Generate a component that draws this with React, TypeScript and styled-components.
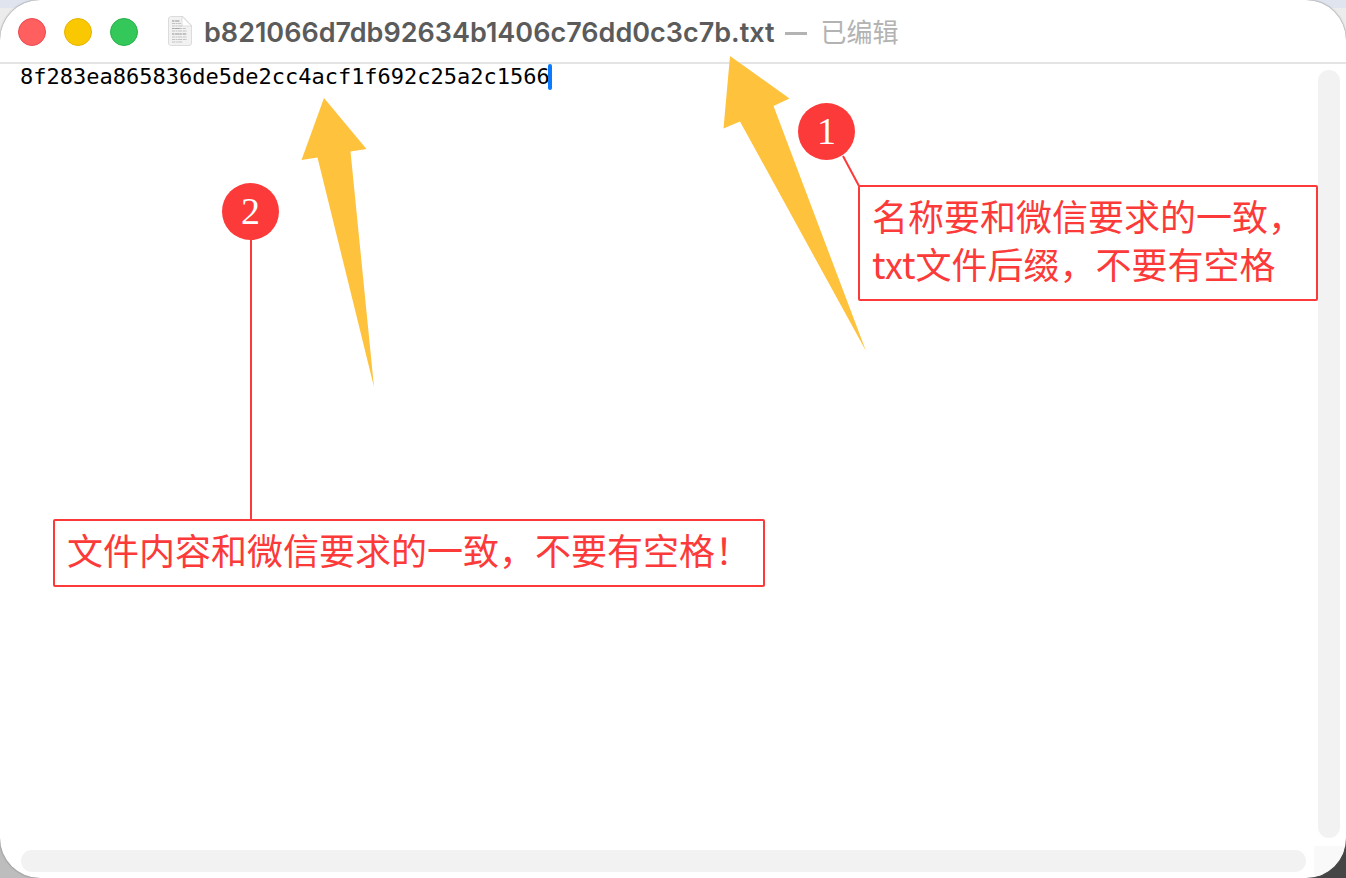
import React from "react";
import styled, { createGlobalStyle } from "styled-components";

const RED = "#fb3a39";
const AMBER = "#fec23d";

const GlobalStyle = createGlobalStyle`
  * { box-sizing: border-box; }
  body {
    margin: 0;
    background:
      linear-gradient(#e0e4ee, #e0e4ee) 0 0 / 100% 8px no-repeat,
      linear-gradient(90deg, #bdbdbd 50%, #454545 50%) 0 100% / 100% 50% no-repeat,
      #ececec;
    font-family: Inter, "Noto Sans CJK SC", sans-serif;
  }
`;

const Window = styled.main`
  position: relative;
  display: flex;
  flex-direction: column;
  min-height: 100vh;
  overflow: hidden;
  border-radius: 40px;
  background: #fff;
  box-shadow: 0 0 2px #666;
`;

const TitleBar = styled.header`
  display: flex;
  align-items: center;
  height: 64px;
  padding: 2px 18px 0;
  border-bottom: 2px solid #e4e4e4;
`;

const Lights = styled.div`
  display: flex;
  gap: 18px;
  margin-right: 30px;
`;

const Light = styled.button<{ $fill: string; $edge: string }>`
  width: 28px;
  height: 28px;
  padding: 0;
  border: 1px solid ${(p) => p.$edge};
  border-radius: 50%;
  background: ${(p) => p.$fill};
`;

const DocIcon = styled.svg`
  flex: none;
  width: 24px;
  height: 30px;
  margin: 0 12px 2px 0;
`;

const FileName = styled.h1`
  margin: 0;
  padding-top: 2px;
  color: #5b5b5b;
  font-size: 27px;
  font-weight: 600;
  line-height: 32px;
  white-space: nowrap;
`;

const Status = styled.span`
  display: flex;
  align-items: center;
  gap: 14px;
  margin-left: 10px;
  padding-top: 2px;
  color: #b3b3b3;
  font-size: 26px;
  line-height: 32px;
  white-space: nowrap;
`;

const Dash = styled.span`
  width: 22px;
  height: 3px;
  background: currentColor;
`;

const Body = styled.section`
  flex: 1;
  display: grid;
  grid-template: 1fr 32px / 1fr 32px;
`;

const Editor = styled.div`
  display: flex;
  align-items: flex-start;
  padding-left: 20px;
`;

const TextLine = styled.input`
  width: 40ch;
  height: 26px;
  padding: 0;
  border: 0;
  outline: 0;
  background: transparent;
  color: #000;
  font: 22px/26px "DejaVu Sans Mono", monospace;
`;

const Caret = styled.span`
  width: 4px;
  height: 26px;
  margin-left: -2px;
  border-radius: 2px;
  background: #0a7aff;
`;

const Track = styled.div<{ $vertical?: boolean }>`
  margin: ${(p) => (p.$vertical ? "6px 6px 8px 4px" : "4px 8px 6px 21px")};
  border-radius: 11px;
  background: #f2f2f2;
`;

const Corner = styled.div`
  margin: 0 2px 2px 0;
  background: #f9f9f9;
`;

const Overlay = styled.svg`
  position: absolute;
  top: 0;
  left: 0;
  width: 100%;
  height: 100%;
  pointer-events: none;
`;

const Badge = styled.span<{ $x: number; $y: number }>`
  position: absolute;
  left: ${(p) => p.$x}px;
  top: ${(p) => p.$y}px;
  width: 57px;
  height: 57px;
  border-radius: 50%;
  background: ${RED};
  color: #fff;
  font: 38px/56px "Liberation Serif", serif;
  text-align: center;
`;

const Note = styled.p<{ $x: number; $y: number; $w: number }>`
  position: absolute;
  left: ${(p) => p.$x}px;
  top: ${(p) => p.$y}px;
  width: ${(p) => p.$w}px;
  margin: 0;
  padding: 4px 12px 12px;
  border: 2px solid ${RED};
  border-radius: 2px;
  color: ${RED};
  font: 36px/48px "Noto Sans CJK SC", sans-serif;
  white-space: nowrap;
`;

export default function App() {
  return (
    <>
      <GlobalStyle />
      <Window>
        <TitleBar>
          <Lights>
            <Light $fill="#ff5f5f" $edge="#e84a4e" aria-label="关闭" />
            <Light $fill="#fac800" $edge="#e5b400" aria-label="最小化" />
            <Light $fill="#34c759" $edge="#26b04a" aria-label="缩放" />
          </Lights>
          <DocIcon viewBox="0 0 24 30" aria-hidden="true">
            <path
              d="M3.500 .5h11.500l8.500 9v17.500a2.500 2.500 0 0 1-2.500 2.500H3.500A2.500 2.500 0 0 1 .5 27V3A2.500 2.500 0 0 1 3.500 .5z"
              fill="#f2f2f2"
              stroke="#dcdcdc"
            />
            <path
              d="M4 5h8M4 7.500h9M4 10h11M4 12.500h14M4 15h15M4 18h15M4 21h15M4 23.500h15M4 26h11"
              stroke="#c2c2c2"
              strokeDasharray="3 .6 2 .5 4 .7"
            />
            <path d="M4 5h7M4 12.500h8M4 18h14" stroke="#a8a8a8" strokeDasharray="2 1 4 .6" />
            <path d="M14 .5v7.500a2 2 0 0 0 2 2h7.500z" fill="#fff" stroke="#cfcfcf" strokeWidth=".6" />
          </DocIcon>
          <FileName>b821066d7db92634b1406c76dd0c3c7b.txt</FileName>
          <Status>
            <Dash />
            已编辑
          </Status>
        </TitleBar>
        <Body>
          <Editor>
            <TextLine
              aria-label="文件内容"
              spellCheck={false}
              defaultValue="8f283ea865836de5de2cc4acf1f692c25a2c1566"
            />
            <Caret />
          </Editor>
          <Track $vertical />
          <Track />
          <Corner />
        </Body>
        <Overlay aria-hidden="true">
          <path d="M730 56L789.500 98.500L773.500 106L866 351L740 121.500L723.500 128.500Z" fill={AMBER} />
          <path d="M324 98L366.500 149L350.500 151.500L374 387L317.500 157.500L301.500 160Z" fill={AMBER} />
          <path d="M843 156L859 186M251 240V520" stroke={RED} strokeWidth="2" />
        </Overlay>
        <Badge $x={798} $y={103}>1</Badge>
        <Note $x={858} $y={185} $w={460}>
          名称要和微信要求的一致，
          <br />
          txt文件后缀，不要有空格
        </Note>
        <Badge $x={222} $y={183}>2</Badge>
        <Note $x={53} $y={519} $w={712}>
          文件内容和微信要求的一致，不要有空格！
        </Note>
      </Window>
    </>
  );
}
